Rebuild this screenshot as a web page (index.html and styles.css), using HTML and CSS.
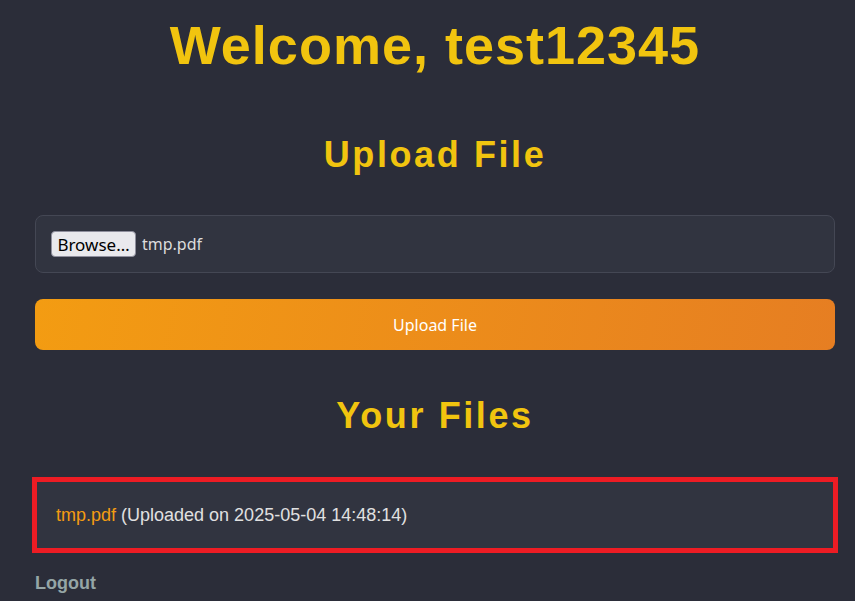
FILE: index.html
```html
<!DOCTYPE html>
<html lang="en">
<head>
<meta charset="utf-8">
<title>Welcome</title>
<link rel="stylesheet" href="styles.css">
</head>
<body>
<div class="container">
  <h1 class="welcome">Welcome, test12345</h1>
  <h2 class="section-title upload-title">Upload File</h2>
  <form class="upload-form">
    <div class="file-field">
      <span class="browse-btn">Browse…</span>
      <span class="file-name">tmp.pdf</span>
    </div>
    <button type="button" class="upload-btn">Upload File</button>
  </form>
  <h2 class="section-title files-title">Your Files</h2>
  <ul class="file-list">
    <li class="file-item"><a class="file-link" href="#">tmp.pdf</a> (Uploaded on 2025-05-04 14:48:14)</li>
  </ul>
  <a class="logout" href="#">Logout</a>
</div>
</body>
</html>
```

FILE: styles.css
```css
html, body {
  margin: 0;
  padding: 0;
  background: #2b2d39;
  height: 100%;
  overflow: hidden;
}

body {
  font-family: "Liberation Sans", Arial, sans-serif;
  color: #e0e0e0;
}

.container {
  width: 800px;
  margin-left: 35px;
  padding-top: 15px;
}

.welcome {
  margin: 0;
  font-size: 54px;
  line-height: 60px;
  letter-spacing: 1px;
  font-weight: bold;
  color: #f1c40f;
  text-align: center;
}

.section-title {
  margin: 0;
  font-size: 36px;
  line-height: 42px;
  letter-spacing: 2.6px;
  font-weight: bold;
  color: #f1c40f;
  text-align: center;
}

.upload-title {
  margin-top: 59px;
}

.upload-form {
  margin-top: 39px;
  display: flex;
  flex-direction: column;
  gap: 26px;
}

.file-field {
  display: flex;
  align-items: center;
  gap: 6px;
  height: 26px;
  padding: 15px;
  border: 1px solid #444754;
  border-radius: 8px;
  background: #313440;
  font-family: "Noto Sans", "Open Sans", sans-serif;
  font-size: 16px;
}

.browse-btn {
  box-sizing: border-box;
  height: 26px;
  width: 85px;
  display: flex;
  align-items: center;
  justify-content: center;
  background: #e9e9ed;
  border: 1px solid #8f8f9d;
  border-radius: 4px;
  color: #000;
  font-size: 17px;
}

.file-name {
  color: #dcdcdc;
}

.upload-btn {
  height: 51px;
  border: none;
  border-radius: 8px;
  background: linear-gradient(100deg, #f39c12 0%, #e67e22 100%);
  color: #fff;
  font-family: "Noto Sans", "Open Sans", sans-serif;
  font-size: 16px;
  padding: 0;
}

.files-title {
  margin-top: 45px;
}

.file-list {
  list-style: none;
  margin: 43px 0 0 0;
  padding: 0;
}

.file-item {
  position: relative;
  height: 30px;
  padding: 20px 21px;
  background: #313440;
  border-radius: 6px;
  font-size: 18px;
  line-height: 30px;
  color: #e0e0e0;
}

.file-item::after {
  content: "";
  position: absolute;
  top: -3px;
  left: -3px;
  right: -3px;
  bottom: -3px;
  border: 5px solid #ed1c24;
  pointer-events: none;
}

.file-link {
  color: #f39c12;
  text-decoration: none;
}

.logout {
  display: inline-block;
  margin-top: 22px;
  font-size: 18px;
  line-height: 22px;
  font-weight: bold;
  color: #95a5a6;
  text-decoration: none;
}
```
